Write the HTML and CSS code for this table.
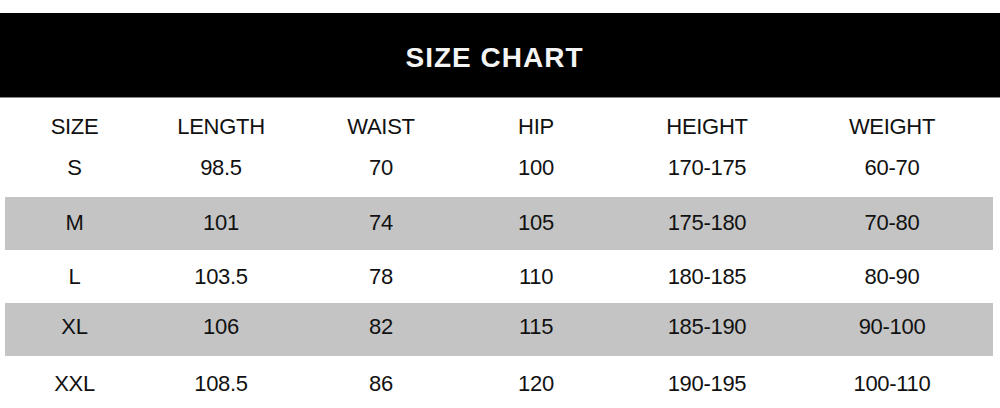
FILE: index.html
```html
<!DOCTYPE html>
<html lang="en">
<head>
<meta charset="utf-8">
<title>Size Chart</title>
<link rel="stylesheet" href="styles.css">
</head>
<body>
<div class="page">
  <header class="banner"><h1 class="title">SIZE CHART</h1></header>
  <div class="table">
    <div class="row head"><span>SIZE</span><span>LENGTH</span><span>WAIST</span><span>HIP</span><span>HEIGHT</span><span>WEIGHT</span></div>
    <div class="row r-s"><span>S</span><span>98.5</span><span>70</span><span>100</span><span>170-175</span><span>60-70</span></div>
    <div class="row shade r-m"><span>M</span><span>101</span><span>74</span><span>105</span><span>175-180</span><span>70-80</span></div>
    <div class="row r-l"><span>L</span><span>103.5</span><span>78</span><span>110</span><span>180-185</span><span>80-90</span></div>
    <div class="row shade r-xl"><span>XL</span><span>106</span><span>82</span><span>115</span><span>185-190</span><span>90-100</span></div>
    <div class="row r-xxl"><span>XXL</span><span>108.5</span><span>86</span><span>120</span><span>190-195</span><span>100-110</span></div>
  </div>
</div>
</body>
</html>
```
FILE: styles.css
```css
html, body {
  margin: 0;
  padding: 0;
  background: #ffffff;
}
body {
  font-family: "Liberation Sans", Arial, sans-serif;
  color: #111111;
}
.page {
  width: 1000px;
  height: 408px;
  overflow: hidden;
  padding-top: 13px;
  box-sizing: border-box;
}
.banner {
  height: 84px;
  background: #000000;
  border-bottom: 1px solid #8a8a8a;
  display: flex;
  align-items: center;
  justify-content: center;
  padding-right: 11px;
}
.title {
  margin: 0;
  padding-top: 5px;
  color: #f4f4f4;
  font-size: 28px;
  font-weight: bold;
  letter-spacing: 1px;
  line-height: 1;
}
.table {
  display: flex;
  flex-direction: column;
}
.row {
  display: grid;
  grid-template-columns: 139px 154px 166px 144px 198px 172px;
  align-items: center;
  margin: 0 7px 0 5px;
  box-sizing: border-box;
  font-size: 22px;
  letter-spacing: -0.3px;
  line-height: 24px;
}
.row span {
  text-align: center;
}
.shade {
  background: #c4c4c4;
}
.head { height: 57px; }
.r-s { height: 42px; padding-bottom: 16px; }
.r-m { height: 53px; padding-bottom: 1px; }
.r-l { height: 53px; }
.r-xl { height: 53px; padding-bottom: 5px; }
.r-xxl { height: 52px; padding-top: 3px; }
```
